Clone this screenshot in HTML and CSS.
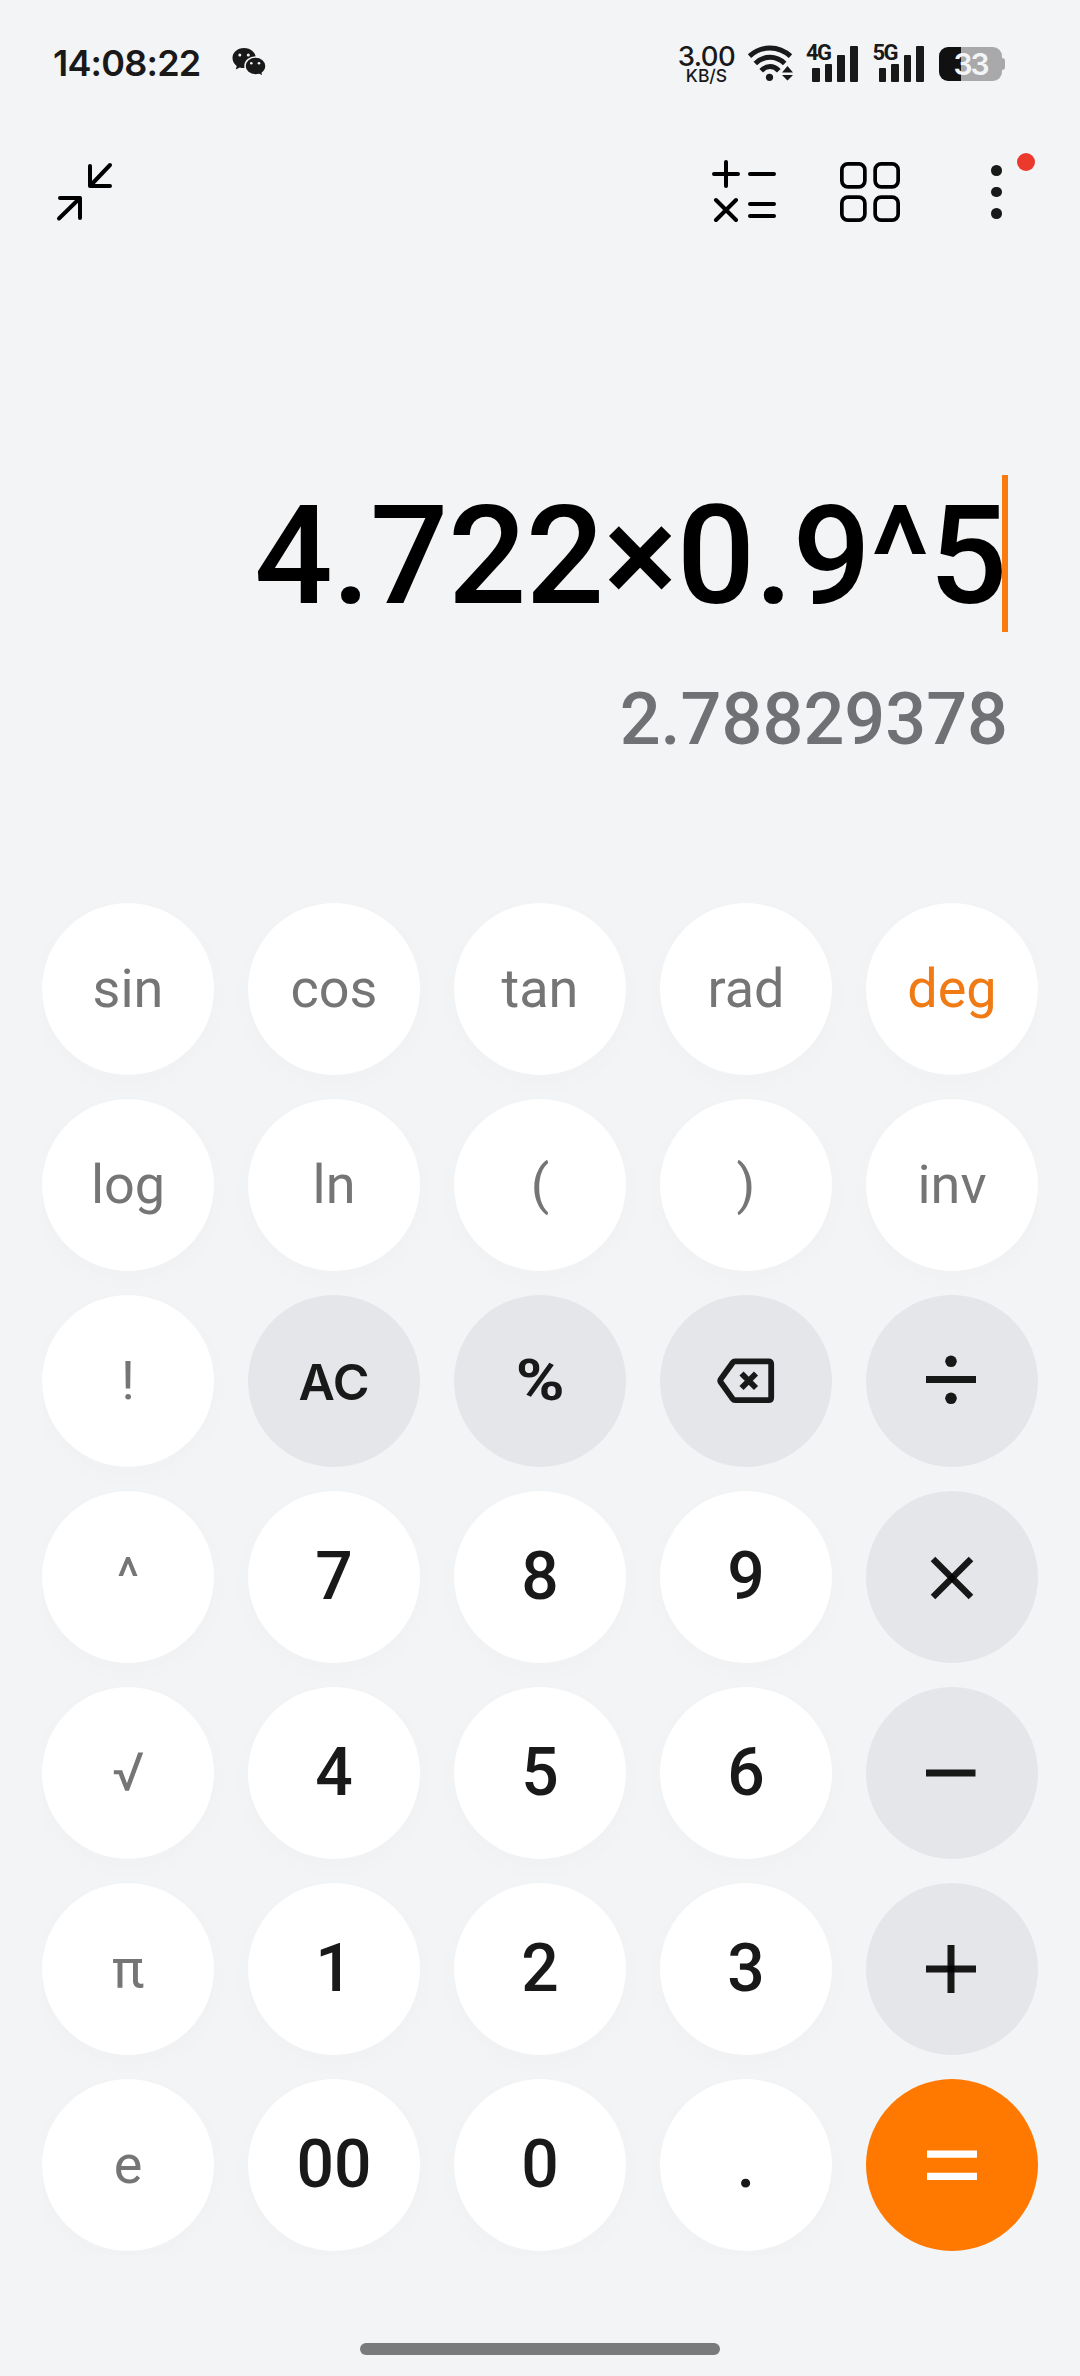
FILE: index.html
```html
<!DOCTYPE html>
<html lang="en">
<head>
<meta charset="utf-8">
<title>Calculator</title>
<link rel="stylesheet" href="styles.css">
</head>
<body>
<div class="screen">
  <header class="status">
    <span class="clock">14:08:22</span>
    <svg class="chat" width="36" height="32" viewBox="0 0 36 32">
      <path d="M13 1C6.300 1 1.500 5.500 1.500 11c0 3.200 1.600 6 4.200 7.900L4.800 22.600l4-2.200c1.300.4 2.700.6 4.200.6 6.700 0 11.800-4.500 11.800-10S19.700 1 13 1z"/>
      <path class="cut" d="M24.500 10C18.600 10 14 14 14 19s4.600 9 10.500 9c1.300 0 2.600-.2 3.700-.5l4 2-.9-3.500c2.300-1.700 3.700-4.100 3.700-7C35 14 30.400 10 24.500 10z"/>
      <circle class="eye" cx="8.800" cy="8" r="1.500"/><circle class="eye" cx="17.300" cy="8" r="1.500"/>
      <circle class="eye" cx="20.300" cy="16.300" r="1.300"/><circle class="eye" cx="28" cy="16.300" r="1.300"/>
    </svg>
    <div class="speed"><span class="rate">3.00</span><span class="unit">KB/S</span></div>
    <svg class="wifi" width="48" height="38" viewBox="0 0 48 38">
      <g class="arc"><path d="M2.500 12.200C14.500 1.200 31.500 1.200 43.500 12.200"/><path d="M8.300 19.500C17 11.200 29 11.200 37.700 19.500"/><path d="M14.200 26.700C19.500 21 26.500 21 31.800 26.700"/></g>
      <circle cx="22.500" cy="33.300" r="3.600"/>
      <path d="M40.500 22l5.500 6.500H35zM40.500 36.500L35 31h11z"/>
    </svg>
    <div class="signal">
      <span class="gen">4G</span>
      <i class="bar b1"></i><i class="bar b2"></i><i class="bar b3"></i><i class="bar b4"></i>
    </div>
    <div class="signal">
      <span class="gen">5G</span>
      <i class="bar b1"></i><i class="bar b2"></i><i class="bar b3"></i><i class="bar b4"></i>
    </div>
    <div class="battery"><span class="level">33</span></div>
  </header>

  <nav class="toolbar">
    <svg class="shrink" width="60" height="60" viewBox="0 2 60 60">
      <path d="M36 10v20h20M56 9L36.500 29.500M6 42h20v20M26 42L5 62.500"/>
    </svg>
    <svg class="convert" width="68" height="66" viewBox="0 0 68 66">
      <path d="M4 16h24M16 4v24M40 16h24M6 42l20 20M26 42L6 62M40 46h24M40 58h24"/>
    </svg>
    <svg class="grid" width="60" height="60" viewBox="0 0 60 60">
      <rect x="1.850" y="1.850" width="23" height="23" rx="6"/><rect x="35.150" y="1.850" width="23" height="23" rx="6"/>
      <rect x="1.850" y="35.150" width="23" height="23" rx="6"/><rect x="35.150" y="35.150" width="23" height="23" rx="6"/>
    </svg>
    <div class="more"><i></i><i></i><i></i><b class="badge"></b></div>
  </nav>

  <main class="display">
    <div class="expression">4.722×0.9^5<span class="cursor"></span></div>
    <div class="result">2.78829378</div>
  </main>

  <section class="keypad">
    <button class="key fn">sin</button><button class="key fn">cos</button><button class="key fn">tan</button><button class="key fn">rad</button><button class="key fn active">deg</button>
    <button class="key fn">log</button><button class="key fn">ln</button><button class="key fn">(</button><button class="key fn">)</button><button class="key fn">inv</button>
    <button class="key fn">!</button><button class="key op clear">AC</button><button class="key op percent"><span class="wide">%</span></button>
    <button class="key op"><svg width="172" height="172" viewBox="0 0 172 172"><path class="line" d="M75 66.300h33.500q2.700 0 2.700 2.700v33.500q0 2.700-2.700 2.700H75q-1.300 0-2.200-1.200L60.800 87.300q-1.100-1.600 0-3.200l12-16.600q.9-1.200 2.200-1.200z"/><path class="line" d="M81.500 78.500l14.500 14.500M96 78.500L81.500 93"/></svg></button>
    <button class="key op"><svg width="172" height="172" viewBox="0 0 172 172"><path d="M60 81h50v7H60z"/><circle cx="85" cy="66.300" r="5.800"/><circle cx="85" cy="103.300" r="5.800"/></svg></button>
    <button class="key fn">^</button><button class="key num">7</button><button class="key num">8</button><button class="key num">9</button>
    <button class="key op"><svg width="172" height="172" viewBox="0 0 172 172"><path class="stroke" d="M67 68l38 38"/><path class="stroke" d="M105 68l-38 38"/></svg></button>
    <button class="key fn">√</button><button class="key num">4</button><button class="key num">5</button><button class="key num">6</button>
    <button class="key op"><svg width="172" height="172" viewBox="0 0 172 172"><path d="M60 82.400h49.500v7H60z"/></svg></button>
    <button class="key fn">π</button><button class="key num">1</button><button class="key num">2</button><button class="key num">3</button>
    <button class="key op"><svg width="172" height="172" viewBox="0 0 172 172"><path class="shade" d="M60 82.500h50v7H60z"/><path class="shade" d="M81.500 62h7v48h-7z"/></svg></button>
    <button class="key fn">e</button><button class="key num">00</button><button class="key num">0</button><button class="key num">.</button>
    <button class="key equals"><svg width="172" height="172" viewBox="0 0 172 172"><path d="M61 71.500h50v7.300H61zM61 93.700h50v7.300H61z"/></svg></button>
  </section>

  <div class="home"></div>
</div>
</body>
</html>
```
FILE: styles.css
```css
* { box-sizing: border-box; }
body { margin: 0; background: #f3f4f6; }
svg { display: block; flex: none; }

.screen {
  width: 1080px;
  height: 2376px;
  display: flex;
  flex-direction: column;
  overflow: hidden;
  background: #f3f4f6;
  font-family: Roboto, "Noto Sans", sans-serif;
  color: #191919;
}

/* Status bar */
.status {
  height: 126px;
  padding: 0 75px 0 53px;
  display: flex;
  align-items: center;
  font-family: Inter, Roboto, sans-serif;
  fill: #191919;
}
.clock { font-size: 36px; font-weight: 600; line-height: 40px; letter-spacing: -.8px; width: 178px; white-space: nowrap; }
.chat { margin-right: auto; }
.cut { stroke: #f3f4f6; stroke-width: 1.5; }
.eye { fill: #f3f4f6; }
.speed { width: 60px; margin-right: 10px; display: flex; flex-direction: column; align-items: center; font-weight: 500; }
.rate { font-size: 27.500px; line-height: 24px; letter-spacing: -.6px; }
.unit { font-size: 17.500px; line-height: 15px; }
.wifi { margin-right: 11.500px; }
.arc { fill: none; stroke: #191919; stroke-width: 5; }
.signal { position: relative; width: 51.500px; height: 37px; margin-right: 15px; padding-left: 6px; display: flex; align-items: flex-end; gap: 5px; }
.gen { position: absolute; left: 0; top: -1px; font: 700 22px/18px Roboto, sans-serif; letter-spacing: -1.5px; }
.bar { width: 7.700px; border-radius: 1px; background: #191919; }
.b1 { height: 14px; }
.b2 { height: 18px; }
.b3 { height: 27px; }
.b4 { height: 36px; }
.battery {
  position: relative;
  width: 63px;
  height: 34px;
  margin: 2px 3px 0 0;
  border-radius: 9px;
  background: linear-gradient(90deg, #111 22px, #a9a9ab 22px);
  display: flex;
  align-items: center;
  justify-content: center;
}
.battery::after { content: ""; position: absolute; right: -3px; top: 11px; width: 3px; height: 12px; border-radius: 0 3px 3px 0; background: #a9a9ab; }
.level { font-size: 30px; font-weight: 600; line-height: 34px; color: #f3f4f6; letter-spacing: -2px; }

/* Toolbar */
.toolbar {
  height: 132px;
  padding: 32px 45px 0 54px;
  display: flex;
  align-items: flex-start;
  fill: none;
  stroke: #000;
  stroke-width: 4;
  stroke-linecap: round;
  stroke-linejoin: round;
}
.shrink { margin-right: auto; overflow: visible; }
.convert { margin-right: 62px; }
.grid { margin: 4px 91px 0 0; stroke-width: 3.700; }
.more { position: relative; width: 44px; height: 54px; margin-top: 7px; display: flex; flex-direction: column; justify-content: space-between; }
.more i { width: 10.600px; height: 10.600px; border-radius: 50%; background: #191919; }
.badge { position: absolute; left: 26px; top: -12px; width: 18px; height: 18px; border-radius: 50%; background: #eb392e; }

/* Display */
.display { height: 645px; padding: 217px 72px 0 0; display: flex; flex-direction: column; align-items: flex-end; }
.expression { position: relative; height: 157px; padding-right: 1px; font-size: 138px; font-weight: 500; line-height: 163px; letter-spacing: -.5px; color: #000; white-space: nowrap; }
.cursor { position: absolute; right: 0; top: 0; width: 6px; height: 157px; background: #f97b0d; }
.result { margin-top: 46px; font-size: 72px; font-weight: 500; line-height: 84px; color: #707174; }

/* Keypad */
.keypad {
  width: 996px;
  height: 1352px;
  margin-left: 42px;
  display: grid;
  grid-template-columns: repeat(5, 172px);
  grid-auto-rows: 172px;
  gap: 24px 34px;
  overflow: clip;
}
.key {
  display: flex;
  align-items: center;
  justify-content: center;
  padding: 0;
  border: 0;
  border-radius: 50%;
  background: #fff;
  box-shadow: 0 8px 22px 6px rgba(20, 30, 50, .012);
  font-family: Roboto, "Noto Sans", sans-serif;
  line-height: 1.172;
  color: #191919;
}
.fn { font-size: 54px; color: #757575; }
.num { font-size: 66px; font-weight: 500; }
.active { color: #f07a13; }
.op, .equals { box-shadow: none; }
.op { background: #e5e6ea; fill: #171818; }
.clear { padding-top: 2px; font-family: Inter, sans-serif; font-size: 50px; font-weight: 600; }
.percent { font-size: 57px; font-weight: 700; }
.wide { transform: scaleX(1.16); }
.line { fill: none; stroke: #171818; stroke-width: 5.800; }
.stroke { stroke: rgba(0, 0, 0, .9); stroke-width: 6.5; }
.shade { fill: rgba(0, 0, 0, .9); }
.equals { background: #ff7800; fill: #fff; }

.home { width: 360px; height: 12px; margin: 88px auto 0; border-radius: 6px; background: #797a7c; }
```
